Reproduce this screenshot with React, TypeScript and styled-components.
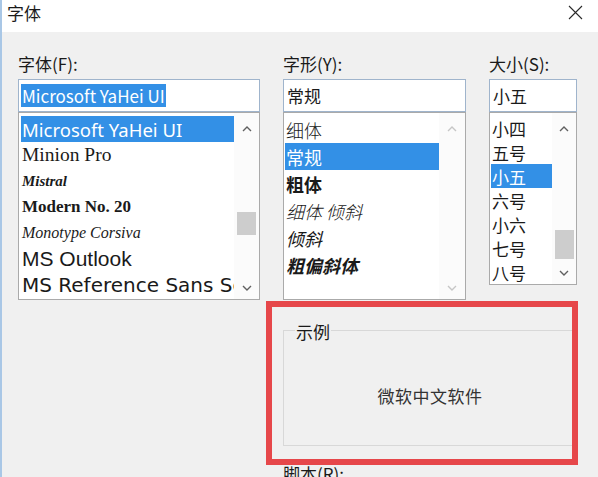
import styled, { createGlobalStyle } from "styled-components";

const GlobalStyle = createGlobalStyle`
  html, body {
    margin: 0;
    padding: 0;
    background: #f0f0f0;
  }
  body {
    font-family: "Noto Sans CJK SC", "Noto Sans", sans-serif;
    color: #1a1a1a;
  }
`;

const Window = styled.div`
  width: 598px;
  height: 477px;
  box-sizing: border-box;
  overflow: hidden;
  background: #f0f0f0;
  border-left: 2px solid #a9c7e6;
  display: flex;
  flex-direction: column;
`;

const TitleBar = styled.div`
  height: 30px;
  flex: none;
  background: #ffffff;
  display: flex;
  align-items: flex-start;
  justify-content: space-between;
  padding: 2px 15px 0 5px;
`;

const Title = styled.div`
  font-size: 17px;
  line-height: 22px;
`;

const CloseButton = styled.div`
  margin-top: 3px;
  width: 15px;
  height: 15px;
  display: flex;
`;

const Body = styled.div`
  display: grid;
  grid-template-columns: 242px 183px 88px;
  column-gap: 23px;
  align-items: start;
  padding: 21px 0 0 16px;
`;

const Field = styled.div`
  display: flex;
  flex-direction: column;
`;

const Label = styled.div`
  font-size: 17px;
  line-height: 22px;
  margin-bottom: 4px;
  white-space: nowrap;
`;

const TextBox = styled.div`
  height: 33px;
  box-sizing: border-box;
  border: 1px solid #9fb4cc;
  background: #ffffff;
  display: flex;
  align-items: center;
  padding: 0 2px;
  font-size: 17px;
  white-space: nowrap;
  overflow: hidden;
`;

const SelectedText = styled.span`
  display: inline-block;
  line-height: 23px;
  padding: 0 1px;
  background: #3390e6;
  color: #ffffff;
`;

const PlainText = styled.span`
  padding-left: 1px;
`;

const ListBox = styled.div<{ $height: number }>`
  height: ${(p) => p.$height}px;
  box-sizing: border-box;
  border: 1px solid #aaaaaa;
  background: #ffffff;
  display: flex;
`;

const Items = styled.div<{ $pad: number }>`
  flex: 1;
  min-width: 0;
  padding: 3px 0 0 ${(p) => p.$pad}px;
  overflow: hidden;
`;

interface ItemProps {
  $row: number;
  $selected?: boolean;
  $family?: string;
  $size?: number;
  $italic?: boolean;
  $weight?: number;
}

const Item = styled.div<ItemProps>`
  height: ${(p) => p.$row}px;
  display: flex;
  align-items: center;
  padding-left: 1px;
  white-space: nowrap;
  overflow: hidden;
  font-family: ${(p) => p.$family ?? `"Noto Sans CJK SC", sans-serif`};
  font-size: ${(p) => p.$size ?? 18}px;
  font-style: ${(p) => (p.$italic ? "italic" : "normal")};
  font-weight: ${(p) => p.$weight ?? 400};
  background: ${(p) => (p.$selected ? "#3390e6" : "transparent")};
  color: ${(p) => (p.$selected ? "#ffffff" : "#1a1a1a")};
`;

const ScrollBar = styled.div<{ $width: number }>`
  width: ${(p) => p.$width}px;
  flex: none;
  display: flex;
  flex-direction: column;
  align-items: center;
  padding-top: 4px;
  background: #fbfbfb;
`;

const ArrowCell = styled.div<{ $height: number; $disabled?: boolean }>`
  height: ${(p) => p.$height}px;
  flex: none;
  display: flex;
  align-items: center;
  justify-content: center;
  color: ${(p) => (p.$disabled ? "#c6c6c6" : "#606060")};
`;

const Track = styled.div`
  flex: 1;
  align-self: stretch;
  display: flex;
  flex-direction: column;
  align-items: center;
`;

const Thumb = styled.div<{ $offset: number; $height: number }>`
  margin-top: ${(p) => p.$offset}px;
  height: ${(p) => p.$height}px;
  width: 19px;
  background: #cdcdcd;
`;

const SampleGroup = styled.div`
  grid-column: 2 / 4;
  margin-top: 30px;
  height: 116px;
  box-sizing: border-box;
  position: relative;
  border: 1px solid #d8d8d8;
  display: flex;
  align-items: center;
  justify-content: center;
  padding-top: 15px;
`;

const Legend = styled.span`
  position: absolute;
  top: -10px;
  left: 11px;
  padding: 0 1px;
  background: #f0f0f0;
  font-size: 17px;
  line-height: 22px;
`;

const SampleText = styled.div`
  font-size: 17px;
  letter-spacing: 0.5px;
  color: #333333;
`;

/* red marker frame drawn around the preview group */
const Highlight = styled.div`
  position: absolute;
  top: -30px;
  left: -18px;
  right: -2px;
  bottom: -20px;
  border: 6px solid #e6474a;
  pointer-events: none;
`;

const ScriptLabel = styled(Label)`
  grid-column: 2 / 4;
  margin-top: 17px;
`;

function Chevron({ down }: { down?: boolean }) {
  return (
    <svg width="10" height="6" viewBox="0 0 10 6" fill="none">
      <path
        d={down ? "M1 1L5 5L9 1" : "M1 5L5 1L9 5"}
        stroke="currentColor"
        strokeWidth="1.4"
      />
    </svg>
  );
}

interface BarProps {
  width: number;
  downCell: number;
  thumb?: { offset: number; height: number };
  disabled?: boolean;
}

function Bar({ width, downCell, thumb, disabled }: BarProps) {
  return (
    <ScrollBar $width={width}>
      <ArrowCell $height={24} $disabled={disabled}>
        <Chevron />
      </ArrowCell>
      <Track>{thumb && <Thumb $offset={thumb.offset} $height={thumb.height} />}</Track>
      <ArrowCell $height={downCell} $disabled={disabled}>
        <Chevron down />
      </ArrowCell>
    </ScrollBar>
  );
}

const fonts = [
  { name: "Microsoft YaHei UI", family: `"Noto Sans", sans-serif`, size: 18.5 },
  { name: "Minion Pro", family: `"Liberation Serif", serif`, size: 19.5 },
  { name: "Mistral", family: `"Liberation Serif", serif`, size: 15, italic: true, weight: 700 },
  { name: "Modern No. 20", family: `"Liberation Serif", serif`, size: 17, weight: 700 },
  { name: "Monotype Corsiva", family: `"Liberation Serif", serif`, size: 16, italic: true },
  { name: "MS Outlook", family: `"Liberation Sans", sans-serif`, size: 21 },
  { name: "MS Reference Sans Serif", family: `"DejaVu Sans", sans-serif`, size: 20 },
];

const styles = [
  { name: "细体", weight: 300 },
  { name: "常规", weight: 400 },
  { name: "粗体", weight: 700 },
  { name: "细体 倾斜", weight: 300, italic: true },
  { name: "倾斜", weight: 400, italic: true },
  { name: "粗偏斜体", weight: 700, italic: true },
];

const sizes = ["小四", "五号", "小五", "六号", "小六", "七号", "八号"];

export default function App() {
  return (
    <>
      <GlobalStyle />
      <Window>
        <TitleBar>
          <Title>字体</Title>
          <CloseButton>
            <svg width="15" height="15" viewBox="0 0 15 15">
              <path d="M1 1L14 14M14 1L1 14" stroke="#2a2a2a" strokeWidth="1.1" />
            </svg>
          </CloseButton>
        </TitleBar>
        <Body>
          <Field>
            <Label>字体(F):</Label>
            <TextBox>
              <SelectedText>Microsoft YaHei UI</SelectedText>
            </TextBox>
            <ListBox $height={188}>
              <Items $pad={2}>
                {fonts.map((f, i) => (
                  <Item
                    key={f.name}
                    $row={26}
                    $selected={i === 0}
                    $family={f.family}
                    $size={f.size}
                    $italic={f.italic}
                    $weight={f.weight}
                  >
                    {f.name}
                  </Item>
                ))}
              </Items>
              <Bar width={25} downCell={22} thumb={{ offset: 71, height: 23 }} />
            </ListBox>
          </Field>

          <Field>
            <Label>字形(Y):</Label>
            <TextBox>
              <PlainText>常规</PlainText>
            </TextBox>
            <ListBox $height={188}>
              <Items $pad={1}>
                {styles.map((s) => (
                  <Item
                    key={s.name}
                    $row={27}
                    $selected={s.name === "常规"}
                    $italic={s.italic}
                    $weight={s.weight}
                  >
                    {s.name}
                  </Item>
                ))}
              </Items>
              <Bar width={26} downCell={22} disabled />
            </ListBox>
          </Field>

          <Field>
            <Label>大小(S):</Label>
            <TextBox>
              <PlainText>小五</PlainText>
            </TextBox>
            <ListBox $height={173}>
              <Items $pad={1}>
                {sizes.map((s) => (
                  <Item key={s} $row={24} $size={17} $selected={s === "小五"}>
                    {s}
                  </Item>
                ))}
              </Items>
              <Bar width={24} downCell={22} thumb={{ offset: 89, height: 29 }} />
            </ListBox>
          </Field>

          <SampleGroup>
            <Legend>示例</Legend>
            <SampleText>微软中文软件</SampleText>
            <Highlight />
          </SampleGroup>
          <ScriptLabel>脚本(R):</ScriptLabel>
        </Body>
      </Window>
    </>
  );
}
